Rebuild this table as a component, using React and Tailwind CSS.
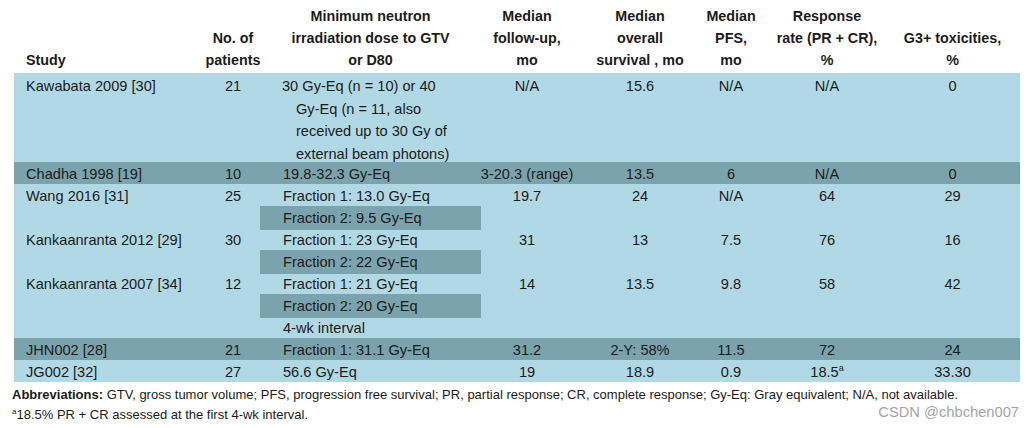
import React from "react";

const COLS = "grid grid-cols-[192px_54px_221px_92px_134px_48px_144px_121px]";
const LIGHT = "bg-[#b1d9e5]";
const DARK = "bg-[#7ba3ad]";

const header = [
  ["Study"],
  ["No. of", "patients"],
  ["Minimum neutron", "irradiation dose to GTV", "or D80"],
  ["Median", "follow-up,", "mo"],
  ["Median", "overall", "survival , mo"],
  ["Median", "PFS,", "mo"],
  ["Response", "rate (PR + CR),", "%"],
  ["G3+ toxicities,", "%"],
];

const rows = [
  { bg: DARK, cells: ["Chadha 1998 [19]", "10", "19.8-32.3 Gy-Eq", "3-20.3 (range)", "13.5", "6", "N/A", "0"] },
  { bg: LIGHT, cells: ["Wang 2016 [31]", "25", "Fraction 1: 13.0 Gy-Eq", "19.7", "24", "N/A", "64", "29"] },
  { bg: LIGHT, sub: true, cells: ["", "", "Fraction 2: 9.5 Gy-Eq", "", "", "", "", ""] },
  { bg: LIGHT, cells: ["Kankaanranta 2012 [29]", "30", "Fraction 1: 23 Gy-Eq", "31", "13", "7.5", "76", "16"] },
  { bg: LIGHT, sub: true, cells: ["", "", "Fraction 2: 22 Gy-Eq", "", "", "", "", ""] },
  { bg: LIGHT, cells: ["Kankaanranta 2007 [34]", "12", "Fraction 1: 21 Gy-Eq", "14", "13.5", "9.8", "58", "42"] },
  { bg: LIGHT, sub: true, cells: ["", "", "Fraction 2: 20 Gy-Eq", "", "", "", "", ""] },
  { bg: LIGHT, cells: ["", "", "4-wk interval", "", "", "", "", ""] },
  { bg: DARK, cells: ["JHN002 [28]", "21", "Fraction 1: 31.1 Gy-Eq", "31.2", "2-Y: 58%", "11.5", "72", "24"] },
  {
    bg: LIGHT,
    cells: [
      "JG002 [32]", "27", "56.6 Gy-Eq", "19", "18.9", "0.9",
      <span>18.5<sup className="text-[9px] relative -top-[6px]">a</sup></span>,
      "33.30",
    ],
  },
];

function alignFor(i) {
  if (i === 0) return "pl-3";
  if (i === 2) return "pl-[23px]";
  if (i === 7) return "justify-center pr-[14px]";
  return "justify-center";
}

function Row({ bg, sub, cells }) {
  return (
    <div className={`${COLS} ${bg} h-[22px]`}>
      {cells.map((c, i) => (
        <div key={i} className={`flex whitespace-nowrap leading-[24px] ${alignFor(i)} ${sub && i === 2 ? DARK : ""}`}>
          {c}
        </div>
      ))}
    </div>
  );
}

export default function App() {
  return (
    <div className="relative w-[1027px] h-[428px] overflow-hidden bg-white text-[#1b1b1b] font-['Liberation_Sans',Arial,sans-serif]">
      <div className="ml-[14px] w-[1006px] text-[14.6px]">
        {/* header */}
        <div className={`${COLS} h-[73px] pb-[2px] font-bold text-[14.3px] leading-[22px]`}>
          {header.map((lines, i) => (
            <div key={i} className={`flex flex-col justify-end whitespace-nowrap ${i === 0 ? "pl-3 items-start" : i === 7 ? "items-center pr-[14px]" : "items-center"}`}>
              {lines.map((l) => (
                <span key={l}>{l}</span>
              ))}
            </div>
          ))}
        </div>

        {/* Kawabata */}
        <div className={`${COLS} ${LIGHT} h-[89px] pt-[2px] leading-[22.5px]`}>
          <div className="pl-3 whitespace-nowrap">Kawabata 2009 [30]</div>
          <div className="flex justify-center">21</div>
          <div className="flex flex-col whitespace-nowrap">
            <span className="pl-[22px]">30 Gy-Eq (n = 10) or 40</span>
            <span className="pl-[36px]">Gy-Eq (n = 11, also</span>
            <span className="pl-[36px]">received up to 30 Gy of</span>
            <span className="pl-[36px]">external beam photons)</span>
          </div>
          <div className="flex justify-center">N/A</div>
          <div className="flex justify-center">15.6</div>
          <div className="flex justify-center">N/A</div>
          <div className="flex justify-center">N/A</div>
          <div className="flex justify-center pr-[14px]">0</div>
        </div>

        {rows.map((r, i) => (
          <Row key={i} {...r} />
        ))}
      </div>

      {/* footnotes */}
      <div className="pl-[12px] pt-[3px] text-[13px] leading-[20px] whitespace-nowrap">
        <p>
          <span className="font-bold">Abbreviations:</span> GTV, gross tumor volume; PFS, progression free survival; PR, partial response; CR, complete response; Gy-Eq: Gray equivalent; N/A, not available.
        </p>
        <p>
          <sup className="text-[8px] relative -top-[5px]">a</sup>18.5% PR + CR assessed at the first 4-wk interval.
        </p>
      </div>

      {/* watermark */}
      <div className="absolute right-[8px] top-[402px] text-[14.7px] leading-[20px] text-[#a4a4a4]">
        CSDN @chbchen007
      </div>
    </div>
  );
}
